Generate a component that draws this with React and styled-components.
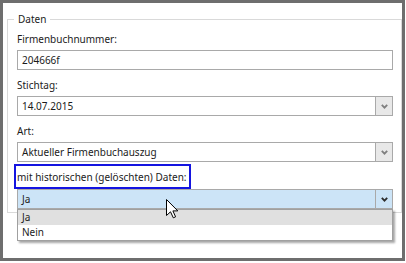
import React from 'react';
import styled, { createGlobalStyle, css } from 'styled-components';

const Global = createGlobalStyle`
  html, body { margin: 0; padding: 0; background: #ffffff; }
`;

const Frame = styled.div`
  position: relative;
  box-sizing: border-box;
  width: 405px;
  height: 261px;
  border: 3px solid #6e6e6e;
  background: #ffffff;
  padding: 9px 0 0 4px;
  font-family: "Noto Sans", "Segoe UI", sans-serif;
  font-size: 10px;
  color: #1b1b1b;
`;

const Group = styled.fieldset`
  margin: 0;
  padding: 5px 8px 3px 9px;
  border: 1px solid #d9d9d9;
  min-width: 0;
`;

const Legend = styled.legend`
  margin-left: -3px;
  padding: 0 4px;
  line-height: 15px;
`;

const Stack = styled.div`
  display: flex;
  flex-direction: column;
  gap: 8px;
`;

const Field = styled.div`
  display: flex;
  flex-direction: column;
  gap: ${(p) => p.$gap ?? 3}px;
`;

const Label = styled.label`
  position: relative;
  align-self: flex-start;
  line-height: 15px;
  ${(p) =>
    p.$marked &&
    css`
      &::after {
        content: '';
        position: absolute;
        top: -6px;
        bottom: -4px;
        left: -3px;
        right: -4px;
        border: 2px solid #1414e0;
      }
    `}
`;

const TextBox = styled.div`
  box-sizing: border-box;
  height: 20px;
  border: 1px solid #a9a9a9;
  padding: 0 4px;
  line-height: 18px;
  background: #ffffff;
`;

const Combo = styled.div`
  position: relative;
  box-sizing: border-box;
  height: 20px;
  display: flex;
  border: 1px solid #a9a9a9;
  background: ${(p) => (p.$open ? '#cce4f7' : '#ffffff')};
`;

const ComboValue = styled.span`
  flex: 1;
  padding: 0 4px;
  line-height: 18px;
`;

const ComboButton = styled.span`
  width: 16px;
  border-left: 1px solid #a9a9a9;
  background: ${(p) => (p.$open ? '#cce4f7' : '#e8e8e8')};
  display: flex;
  align-items: center;
  justify-content: center;
  color: ${(p) => (p.$open ? '#2d2d2d' : '#7f7f7f')};
`;

const Menu = styled.ul`
  position: absolute;
  top: calc(100% + 1px);
  left: -1px;
  right: -1px;
  margin: 0;
  padding: 0;
  list-style: none;
  background: #ffffff;
  border: 1px solid #a0a0a0;
  box-shadow: 2px 2px 2px rgba(0, 0, 0, 0.35);
  z-index: 2;
`;

const Option = styled.li`
  height: 15px;
  line-height: 15px;
  padding-left: 4px;
  background: ${(p) => (p.$active ? '#e0e0e0' : 'transparent')};
`;

const Pointer = styled.svg`
  position: absolute;
  left: 163px;
  top: 196px;
  z-index: 3;
`;

const Chevron = () => (
  <svg width="7" height="5" viewBox="0 0 7 5">
    <polyline points="0.8,0.8 3.5,3.6 6.2,0.8" fill="none" stroke="currentColor" strokeWidth="1.8" />
  </svg>
);

const Dropdown = ({ value, open, options }) => (
  <Combo $open={open}>
    <ComboValue>{value}</ComboValue>
    <ComboButton $open={open}>
      <Chevron />
    </ComboButton>
    {open && (
      <Menu>
        {options.map((o) => (
          <Option key={o} $active={o === value}>
            {o}
          </Option>
        ))}
      </Menu>
    )}
  </Combo>
);

export default function App() {
  return (
    <>
      <Global />
      <Frame>
        <Group>
          <Legend>Daten</Legend>
          <Stack>
            <Field>
              <Label>Firmenbuchnummer:</Label>
              <TextBox>204666f</TextBox>
            </Field>
            <Field>
              <Label>Stichtag:</Label>
              <Dropdown value="14.07.2015" />
            </Field>
            <Field>
              <Label>Art:</Label>
              <Dropdown value="Aktueller Firmenbuchauszug" />
            </Field>
            <Field $gap={4}>
              <Label $marked>mit historischen (gelöschten) Daten:</Label>
              <Dropdown value="Ja" open options={['Ja', 'Nein']} />
            </Field>
          </Stack>
        </Group>
        <Pointer width="13" height="20" viewBox="0 0 13 20">
          <path
            d="M0.5 0.5 L0.5 16.5 L4.5 12.8 L7.3 18.8 L9.6 17.8 L6.9 11.9 L11.8 11.9 Z"
            fill="#ffffff"
            stroke="#000000"
            strokeWidth="1"
            strokeLinejoin="miter"
          />
        </Pointer>
      </Frame>
    </>
  );
}
